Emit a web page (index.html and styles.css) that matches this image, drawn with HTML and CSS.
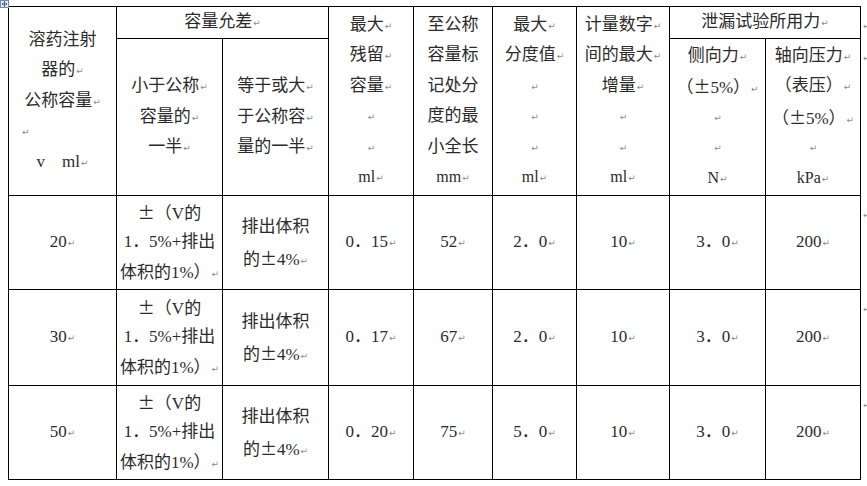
FILE: index.html
```html
<!DOCTYPE html>
<html lang="zh-CN">
<head>
<meta charset="utf-8">
<title>溶药注射器规格表</title>
<link rel="stylesheet" href="styles.css">
</head>
<body>
<div class="page">
  <svg class="move-handle" width="9" height="8" viewBox="0 0 9 8" aria-hidden="true">
    <rect x="0.5" y="0.5" width="8" height="7" fill="#e8eef8" stroke="#6d88b8"/>
    <path d="M4.5 1.5v5M2 4h5M4.5 1.5l-1 1M4.5 1.5l1 1M4.5 6.5l-1-1M4.5 6.5l1-1M2 4l1-1M2 4l1 1M7 4l-1-1M7 4l-1 1" stroke="#2d4f8a" stroke-width="0.8" fill="none"/>
  </svg>
  <table class="spec">
    <colgroup>
      <col class="w1"><col class="w2"><col class="w3"><col class="w4"><col class="w5">
      <col class="w6"><col class="w7"><col class="w8"><col class="w9"><col class="we">
    </colgroup>
    <tr class="r-h1">
      <td rowspan="2">
        <p>溶药注射</p>
        <p>器的<i>↵</i></p>
        <p>公称容量<i>↵</i></p>
        <p class="left"><i>↵</i></p>
        <p>v&nbsp;&nbsp;&nbsp;&nbsp;ml<i>↵</i></p>
      </td>
      <td colspan="2"><p>容量允差<i>↵</i></p></td>
      <td rowspan="2">
        <p>最大<i>↵</i></p>
        <p>残留<i>↵</i></p>
        <p>容量<i>↵</i></p>
        <p><i>↵</i></p>
        <p><i>↵</i></p>
        <p class="sm">ml<i>↵</i></p>
      </td>
      <td rowspan="2">
        <p>至公称</p>
        <p>容量标</p>
        <p>记处分</p>
        <p>度的最</p>
        <p>小全长</p>
        <p class="sm">mm<i>↵</i></p>
      </td>
      <td rowspan="2">
        <p>最大<i>↵</i></p>
        <p>分度值<i>↵</i></p>
        <p><i>↵</i></p>
        <p><i>↵</i></p>
        <p><i>↵</i></p>
        <p class="sm">ml<i>↵</i></p>
      </td>
      <td rowspan="2">
        <p>计量数字<i>↵</i></p>
        <p>间的最大<i>↵</i></p>
        <p>增量<i>↵</i></p>
        <p><i>↵</i></p>
        <p><i>↵</i></p>
        <p class="sm">ml<i>↵</i></p>
      </td>
      <td colspan="2"><p>泄漏试验所用力<i>↵</i></p></td>
      <td class="eol"><i>↵</i></td>
    </tr>
    <tr class="r-h2">
      <td>
        <p>小于公称<i>↵</i></p>
        <p>容量的<i>↵</i></p>
        <p>一半<i>↵</i></p>
      </td>
      <td>
        <p>等于或大<i>↵</i></p>
        <p>于公称容<i>↵</i></p>
        <p>量的一半<i>↵</i></p>
      </td>
      <td>
        <p>侧向力<i>↵</i></p>
        <p>（<span class="cj">±</span>5%）<i>↵</i></p>
        <p><i>↵</i></p>
        <p><i>↵</i></p>
        <p class="sm">N<i>↵</i></p>
      </td>
      <td>
        <p>轴向压力<i>↵</i></p>
        <p>（表压）<i>↵</i></p>
        <p>（<span class="cj">±</span>5%）<i>↵</i></p>
        <p><i>↵</i></p>
        <p class="sm">kPa<i>↵</i></p>
      </td>
      <td class="eol"><i>↵</i></td>
    </tr>
    <tr class="r-d1">
      <td><p>20<i>↵</i></p></td>
      <td><p><span class="cj">±</span>（V的</p><p>1．5%+排出</p><p>体积的1%）<i>↵</i></p></td>
      <td><p>排出体积</p><p>的<span class="cj">±</span>4%<i>↵</i></p></td>
      <td><p>0．15<i>↵</i></p></td>
      <td><p>52<i>↵</i></p></td>
      <td><p>2．0<i>↵</i></p></td>
      <td><p>10<i>↵</i></p></td>
      <td><p>3．0<i>↵</i></p></td>
      <td><p>200<i>↵</i></p></td>
      <td class="eol"><i>↵</i></td>
    </tr>
    <tr class="r-d2">
      <td><p>30<i>↵</i></p></td>
      <td><p><span class="cj">±</span>（V的</p><p>1．5%+排出</p><p>体积的1%）<i>↵</i></p></td>
      <td><p>排出体积</p><p>的<span class="cj">±</span>4%<i>↵</i></p></td>
      <td><p>0．17<i>↵</i></p></td>
      <td><p>67<i>↵</i></p></td>
      <td><p>2．0<i>↵</i></p></td>
      <td><p>10<i>↵</i></p></td>
      <td><p>3．0<i>↵</i></p></td>
      <td><p>200<i>↵</i></p></td>
      <td class="eol"><i>↵</i></td>
    </tr>
    <tr class="r-d3">
      <td><p>50<i>↵</i></p></td>
      <td><p><span class="cj">±</span>（V的</p><p>1．5%+排出</p><p>体积的1%）<i>↵</i></p></td>
      <td><p>排出体积</p><p>的<span class="cj">±</span>4%<i>↵</i></p></td>
      <td><p>0．20<i>↵</i></p></td>
      <td><p>75<i>↵</i></p></td>
      <td><p>5．0<i>↵</i></p></td>
      <td><p>10<i>↵</i></p></td>
      <td><p>3．0<i>↵</i></p></td>
      <td><p>200<i>↵</i></p></td>
      <td class="eol"><i>↵</i></td>
    </tr>
  </table>
  <span class="resize-handle"></span>
</div>
</body>
</html>
```
FILE: styles.css
```css
html, body {
  margin: 0;
  background: #ffffff;
}
body {
  font-family: "Liberation Serif", "Noto Sans CJK SC", serif;
  font-size: 17px;
  color: #2b2b2b;
}
.page {
  position: relative;
  padding: 6px 0 0 8px;
}
.move-handle {
  position: absolute;
  left: 0;
  top: 0;
}
.resize-handle {
  position: absolute;
  left: 862px;
  top: 481px;
  width: 4px;
  height: 4px;
  border: 1px solid #9a9a9a;
  background: #fff;
}
.spec {
  border-collapse: collapse;
  table-layout: fixed;
  width: 858px;
}
.w1 { width: 108px; }
.w2 { width: 106px; }
.w3 { width: 106px; }
.w4 { width: 85px; }
.w5 { width: 79px; }
.w6 { width: 84px; }
.w7 { width: 93px; }
.w8 { width: 96px; }
.w9 { width: 95px; }
.we { width: 6px; }
.r-h1 { height: 32px; }
.r-h2 { height: 157px; }
.r-d1 { height: 94px; }
.r-d2 { height: 96px; }
.r-d3 { height: 94px; }
.spec td {
  border: 1px solid #000;
  padding: 0 2px;
  text-align: center;
  vertical-align: middle;
  white-space: nowrap;
}
.spec p {
  margin: 0;
  height: 30.5px;
  line-height: 30.5px;
}
.spec p.left {
  text-align: left;
  padding-left: 10px;
}
.spec p.sm {
  font-size: 16px;
}
.cj {
  font-family: "Noto Sans CJK SC", sans-serif;
}
.spec i {
  font-style: normal;
  font-family: "DejaVu Sans", sans-serif;
  font-size: 9px;
  line-height: 0;
  color: #8c8c8c;
  margin-left: 1px;
  vertical-align: 1px;
}
.spec td.eol {
  border: none;
  padding: 12px 0 0 1px;
  vertical-align: top;
  text-align: left;
  line-height: 12px;
}
```
